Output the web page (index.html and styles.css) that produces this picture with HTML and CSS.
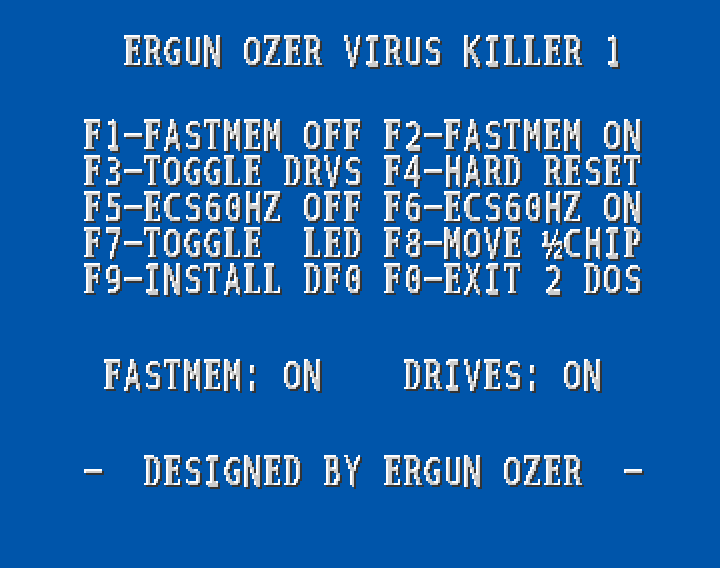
FILE: index.html
```html
<!DOCTYPE html>
<html lang="en">
<head>
<meta charset="utf-8">
<title>Ergun Ozer Virus Killer 1</title>
<link rel="stylesheet" href="styles.css">
</head>
<body>
<svg class="defs" aria-hidden="true">
  <filter id="bevel" filterUnits="userSpaceOnUse" x="0" y="0" width="720" height="568" color-interpolation-filters="sRGB">
    <!-- sample one point of every 2x2 block, then grow it back to the block -->
    <feFlood x="0" y="1" width="1" height="1" flood-color="#000" result="dot"/>
    <feOffset in="dot" dx="0" dy="0" x="0" y="1" width="2" height="2" result="cell"/>
    <feTile in="cell" result="grid"/>
    <feComponentTransfer in="SourceAlpha" result="hard"><feFuncA type="linear" slope="40" intercept="-16"/></feComponentTransfer>
    <feComposite in="hard" in2="grid" operator="in" result="p"/>
    <feOffset in="p" dx="1" dy="0" result="p1"/>
    <feOffset in="p" dx="0" dy="1" result="p2"/>
    <feOffset in="p" dx="1" dy="1" result="p3"/>
    <feMerge result="glyph"><feMergeNode in="p"/><feMergeNode in="p1"/><feMergeNode in="p2"/><feMergeNode in="p3"/></feMerge>
    <feOffset in="glyph" dx="2" dy="2" result="low"/>
    <feFlood flood-color="#333"/><feComposite in2="low" operator="in" result="shade"/>
    <feFlood flood-color="#fff"/><feComposite in2="glyph" operator="in" result="light"/>
    <feComposite in="glyph" in2="low" operator="in" result="inner"/>
    <feFlood flood-color="#ccc"/><feComposite in2="inner" operator="in" result="body"/>
    <feMerge><feMergeNode in="shade"/><feMergeNode in="light"/><feMergeNode in="body"/></feMerge>
  </filter>
</svg>
<main class="screen">
  <h1 class="row title">  ERGUN OZER VIRUS KILLER 1</h1>
  <section class="menu">
    <p class="row">F1-FASTMEM OFF F2-FASTMEM ON</p>
    <p class="row">F3-TOGGLE DRVS F4-HARD RESET</p>
    <p class="row">F5-ECS60HZ OFF F6-ECS60HZ ON</p>
    <p class="row">F7-TOGGLE  LED F8-MOVE ½CHIP</p>
    <p class="row">F9-INSTALL DF0 F0-EXIT 2 DOS</p>
  </section>
  <p class="row status"> FASTMEM: ON    DRIVES: ON</p>
  <p class="row credit">-  DESIGNED BY ERGUN OZER  -</p>
</main>
<script src="cells.js"></script>
</body>
</html>
```
FILE: styles.css
```css
* { box-sizing: border-box; }
body { margin: 0; background: #0055aa; overflow: hidden; }
.defs { position: absolute; width: 0; height: 0; }
.screen {
  width: 720px;
  height: 568px;
  padding: 33px 0 0 84px;
  filter: url(#bevel);
  color: #ccc;
}
.row {
  display: flex;
  height: 36px;
  margin: 0;
  white-space: pre;
  font: 38px/36px "DejaVu Sans Mono", monospace;
}
.menu { padding-top: 48px; }
.status { margin-top: 60px; }
.credit { margin-top: 60px; }
.cell { flex: none; width: 20px; height: 36px; }
.glyph { display: block; width: max-content; line-height: 36px; -webkit-text-stroke: 0.8px #ccc; }
.slab { font-family: "DejaVu Serif", serif; font-weight: bold; -webkit-text-stroke: 0; }
.dash { -webkit-text-stroke: 0; }
.fraction { font-family: "Liberation Sans", sans-serif; }
```
FILE: cells.js
```js
// Fits every character into a 20px cell: [left, right, top, bottom] of its ink.
const SLAB = "EFTLDBRPZ";
const BOX = {
  "1": [4, 14, 0, 28], I: [2, 14, 0, 28], "-": [-0.8, 17.6, 12, 15.6], ":": [6, 10, 4, 28],
  R: [0, 18, 0, 28], "½": [-2, 18, 0, 28]
};
for (const c of "23567890HSU") BOX[c] = [2, 16, 0, 28];
const BASE = 32;
const ctx = document.createElement("canvas").getContext("2d");

for (const row of document.querySelectorAll(".row")) {
  const text = row.textContent;
  row.textContent = "";
  for (const ch of text) {
    const cell = document.createElement("span");
    const glyph = document.createElement("span");
    cell.className = "cell";
    const slab = SLAB.includes(ch);
    glyph.className = slab ? "glyph slab" : ch === "½" ? "glyph fraction" : ch === "-" ? "glyph dash" : "glyph";
    glyph.textContent = ch;
    cell.append(glyph);
    row.append(cell);
    if (ch === " ") continue;
    ctx.font = slab ? 'bold 38px "DejaVu Serif"'
      : ch === "½" ? '38px "Liberation Sans"' : '38px "DejaVu Sans Mono"';
    const m = ctx.measureText(ch);
    let [l, r, t, b] = BOX[ch] || [0, 16, 0, 28];
    if (slab) { l -= 0.6; t -= 0.3; b += 0.3; }
    const w = m.actualBoundingBoxRight + m.actualBoundingBoxLeft;
    const h = m.actualBoundingBoxAscent + m.actualBoundingBoxDescent;
    const sx = (r - l) / w;
    const sy = (b - t) / h;
    const base = (36 + m.fontBoundingBoxAscent - m.fontBoundingBoxDescent) / 2;
    const dx = l + m.actualBoundingBoxLeft * sx;
    const dy = BASE - 28 + t + m.actualBoundingBoxAscent * sy;
    glyph.style.transformOrigin = "0 0";
    glyph.style.transform = `translate(${dx}px, ${dy - base * sy}px) scale(${sx}, ${sy})`;
  }
}
```
